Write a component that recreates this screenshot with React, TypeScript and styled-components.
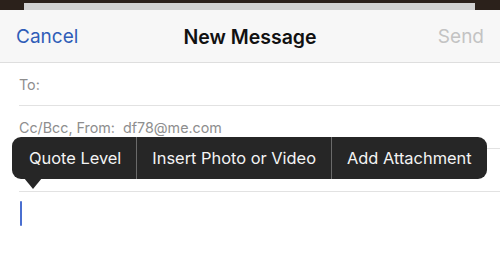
import React from "react";
import styled, { createGlobalStyle } from "styled-components";

const GlobalStyle = createGlobalStyle`
  html, body {
    margin: 0;
    padding: 0;
    width: 500px;
    height: 267px;
    overflow: hidden;
    background: #2b211b;
    font-family: Inter, "Liberation Sans", Arial, sans-serif;
  }
`;

const Backdrop = styled.div`
  padding-top: 3px;
  height: 7px;
  display: flex;
  justify-content: center;
`;

const BehindCard = styled.div`
  width: 451px;
  height: 7px;
  background: #d2d2d2;
  margin-left: -1px;
`;

const Sheet = styled.div`
  position: relative;
  height: 257px;
  background: #ffffff;
`;

const NavBar = styled.div`
  height: 52px;
  background: #f7f7f7;
  border-bottom: 1px solid #dedede;
  display: flex;
  align-items: center;
  justify-content: space-between;
  padding: 0 16px;
  position: relative;
`;

const NavButton = styled.span<{ $disabled?: boolean }>`
  font-size: 19px;
  color: ${(p) => (p.$disabled ? "#c3c3c3" : "#2f5db8")};
  padding-top: 1px;
`;

const Title = styled.span`
  position: absolute;
  left: 0;
  right: 0;
  text-align: center;
  font-size: 19.5px;
  font-weight: 600;
  color: #111;
  padding-top: 1px;
  pointer-events: none;
`;

const Field = styled.div`
  margin-left: 19px;
  height: 43px;
  border-bottom: 1px solid #e2e2e2;
  display: flex;
  align-items: center;
  font-size: 14.3px;
  color: #8e8e8e;
  padding-top: 1px;
  box-sizing: border-box;
`;

const Body = styled.div`
  padding: 9px 0 0 20px;
`;

const Caret = styled.div`
  width: 2px;
  height: 25px;
  background: #4a6fd0;
  border-radius: 1px;
`;

const Menu = styled.div`
  position: absolute;
  left: 12px;
  top: 127px;
  height: 42px;
  display: flex;
  background: #262626;
  border-radius: 9px;
  color: #f4f4f4;
  font-size: 16.4px;

  &::after {
    content: "";
    position: absolute;
    left: 12px;
    top: 41px;
    border-left: 9px solid transparent;
    border-right: 9px solid transparent;
    border-top: 11px solid #262626;
  }
`;

const MenuItem = styled.div<{ $first?: boolean; $last?: boolean }>`
  display: flex;
  align-items: center;
  padding: 0 15px 0 ${(p) => (p.$first ? "17px" : "15px")};
  border-right: ${(p) => (p.$last ? "none" : "1px solid #6a6a6a")};
  white-space: nowrap;
`;

export default function App() {
  return (
    <>
      <GlobalStyle />
      <Backdrop>
        <BehindCard />
      </Backdrop>
      <Sheet>
        <NavBar>
          <NavButton>Cancel</NavButton>
          <Title>New Message</Title>
          <NavButton $disabled>Send</NavButton>
        </NavBar>
        <Field>To:</Field>
        <Field>Cc/Bcc, From:&nbsp; df78@me.com</Field>
        <Field />
        <Body>
          <Caret />
        </Body>
        <Menu>
          <MenuItem $first>Quote Level</MenuItem>
          <MenuItem>Insert Photo or Video</MenuItem>
          <MenuItem $last>Add Attachment</MenuItem>
        </Menu>
      </Sheet>
    </>
  );
}
